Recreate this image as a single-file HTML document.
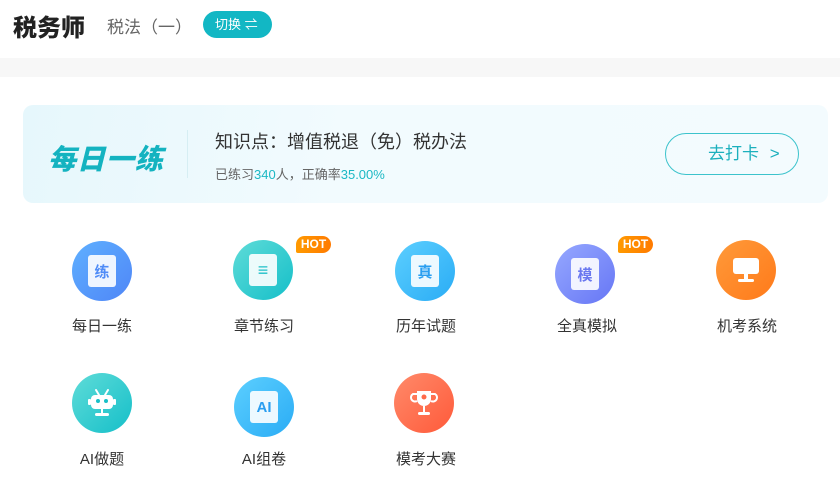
<!DOCTYPE html>
<html><head><meta charset="utf-8"><style>
*{margin:0;padding:0;box-sizing:border-box}
body{width:840px;height:484px;background:#fff;font-family:"Liberation Sans","Noto Sans CJK SC",sans-serif;position:relative;overflow:hidden;color:#333}
.abs{position:absolute}
.title{left:13px;top:8px;font-size:24px;font-weight:900;color:#222}
.sub{left:107px;top:13px;font-size:17px;color:#666}
.sw{left:203px;top:11px;width:69px;height:27px;border-radius:14px;background:#12b7c4;color:#fff;font-size:13px;line-height:27px;padding-left:12px}
.band{left:0;top:58px;width:840px;height:19px;background:#f7f7f7}
.card{left:23px;top:105px;width:805px;height:98px;border-radius:10px;background:linear-gradient(100deg,#e6f7fc,#f2fbfe 40%,#f3fbfe)}
.big{left:48px;top:138px;font-size:28px;font-weight:900;font-style:italic;color:#14b3c0;letter-spacing:1px}
.vl{left:187px;top:130px;width:1px;height:48px;background:#d6eef3}
.kp{left:215px;top:128px;font-size:18px;color:#333}
.st{left:215px;top:164px;font-size:13px;color:#666}
.st span{color:#1cb8c4}
.btn{left:665px;top:133px;width:134px;height:42px;border:1.5px solid #3cc3cc;border-radius:21px;color:#1cb0bd;font-size:17px;line-height:39px;padding-left:42px}
.ic{width:60px;height:60px;border-radius:50%;display:flex;align-items:center;justify-content:center}
.lb{font-size:15px;color:#333;width:120px;text-align:center}
.hot{width:35px;height:17px;border-radius:9px 9px 9px 2px;background:linear-gradient(90deg,#ff9a00,#ff7a00);color:#fff;font-size:12px;font-weight:bold;line-height:17px;text-align:center}
.doc{width:28px;height:32px;border-radius:3px;background:rgba(255,255,255,.9);display:flex;align-items:center;justify-content:center;font-size:15px;font-weight:bold}
</style></head><body>
<div class="abs title">税务师</div>
<div class="abs sub">税法（一）</div>
<div class="abs sw">切换 ⇌</div>
<div class="abs band"></div>
<div class="abs card"></div>
<div class="abs big">每日一练</div>
<div class="abs vl"></div>
<div class="abs kp">知识点：增值税退（免）税办法</div>
<div class="abs st">已练习<span>340</span>人，正确率<span>35.00%</span></div>
<div class="abs btn">去打卡 <span style="margin-left:6px">&gt;</span></div>

<div class="abs ic" style="left:72px;top:241px;background:linear-gradient(135deg,#5fb0ff,#4f86f7)"><div class="doc" style="color:#4f8cf7">练</div></div>
<div class="abs ic" style="left:233px;top:240px;background:linear-gradient(135deg,#5fdcd8,#15bfc9)"><div class="doc" style="color:#20c0c8;font-size:18px">≡</div></div>
<div class="abs ic" style="left:395px;top:241px;background:linear-gradient(135deg,#5ccfff,#2aacf5)"><div class="doc" style="color:#2a9ef0">真</div></div>
<div class="abs ic" style="left:555px;top:244px;background:linear-gradient(135deg,#96a8ff,#6676f5)"><div class="doc" style="color:#6a78f0">模</div></div>
<div class="abs ic" style="left:716px;top:240px;background:linear-gradient(135deg,#ff9a3a,#ff7a1a)">
<svg width="30" height="28" viewBox="0 0 30 28"><rect x="2" y="2" width="26" height="16" rx="3" fill="#fff"/><rect x="13" y="18" width="4" height="5" fill="#fff"/><rect x="7" y="23" width="16" height="3" rx="1.5" fill="#fff"/></svg></div>
<div class="abs hot" style="left:296px;top:236px">HOT</div>
<div class="abs hot" style="left:618px;top:236px">HOT</div>

<div class="abs lb" style="left:42px;top:315px">每日一练</div>
<div class="abs lb" style="left:204px;top:315px">章节练习</div>
<div class="abs lb" style="left:366px;top:315px">历年试题</div>
<div class="abs lb" style="left:527px;top:315px">全真模拟</div>
<div class="abs lb" style="left:687px;top:315px">机考系统</div>

<div class="abs ic" style="left:72px;top:373px;background:linear-gradient(135deg,#5fdcd8,#15bfc9)">
<svg width="32" height="30" viewBox="0 0 32 30"><path d="M10 2l3 5M22 2l-3 5" stroke="#fff" stroke-width="2" stroke-linecap="round"/><rect x="5" y="7" width="22" height="14" rx="4" fill="#fff"/><rect x="2" y="11" width="3" height="6" rx="1" fill="#fff"/><rect x="27" y="11" width="3" height="6" rx="1" fill="#fff"/><circle cx="12" cy="13" r="2" fill="#18c0c8"/><circle cx="20" cy="13" r="2" fill="#18c0c8"/><rect x="15" y="21" width="2" height="4" fill="#fff"/><rect x="9" y="25" width="14" height="3" rx="1.5" fill="#fff"/></svg></div>
<div class="abs ic" style="left:234px;top:377px;background:linear-gradient(135deg,#5ccfff,#2aacf5)"><div class="doc" style="color:#2a9ef0">AI</div></div>
<div class="abs ic" style="left:394px;top:373px;background:linear-gradient(135deg,#ff8a6a,#ff5a3a)">
<svg width="30" height="30" viewBox="0 0 30 30"><path d="M8 3h14v8a7 7 0 0 1-14 0z" fill="#fff"/><path d="M8 6H4a4 4 0 0 0 4 7M22 6h4a4 4 0 0 1-4 7" stroke="#fff" stroke-width="2" fill="none"/><rect x="14" y="18" width="2" height="6" fill="#fff"/><rect x="9" y="24" width="12" height="3" rx="1.5" fill="#fff"/><circle cx="15" cy="9" r="2.5" fill="#ff6a4a"/></svg></div>

<div class="abs lb" style="left:42px;top:448px">AI做题</div>
<div class="abs lb" style="left:204px;top:448px">AI组卷</div>
<div class="abs lb" style="left:366px;top:448px">模考大赛</div>
</body></html>
